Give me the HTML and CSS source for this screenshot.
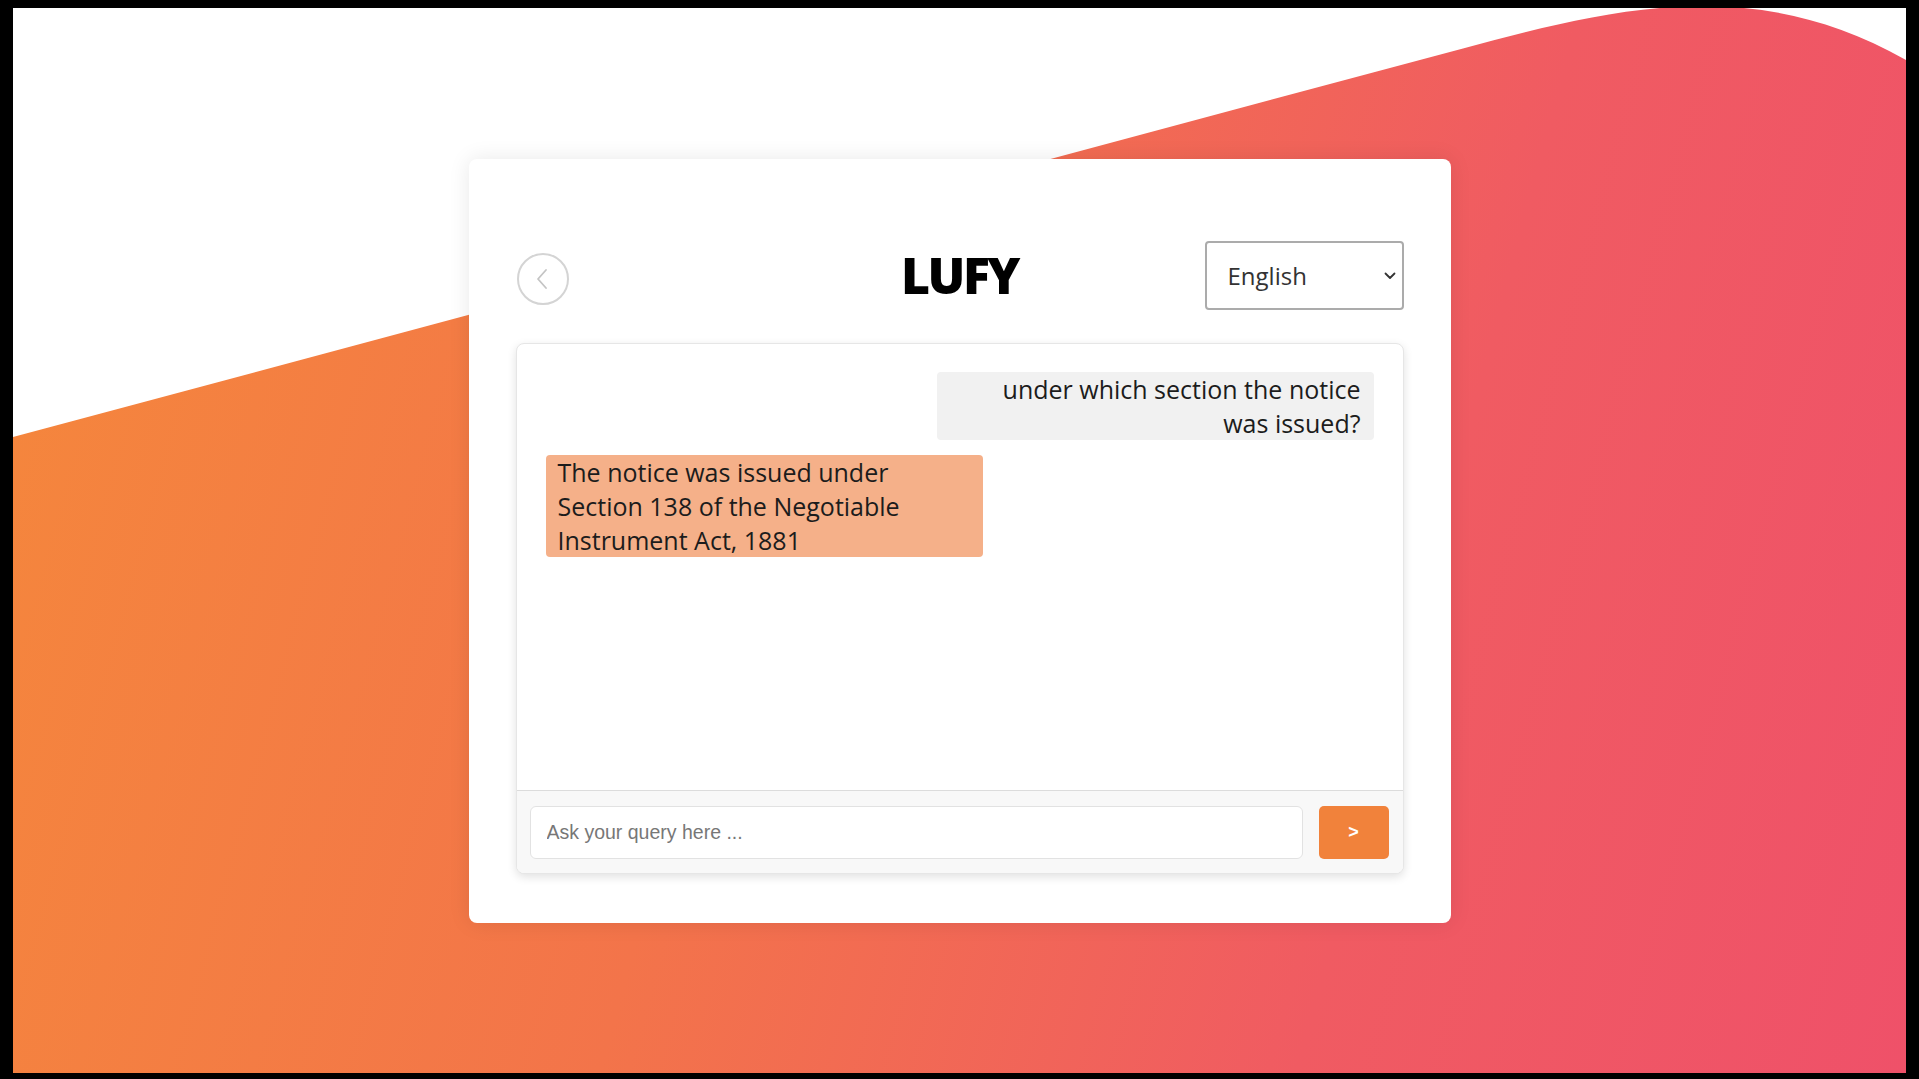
FILE: index.html
```html
<!DOCTYPE html>
<html lang="en">
<head>
<meta charset="utf-8">
<title>LUFY</title>
<link rel="stylesheet" href="styles.css">
</head>
<body>
<div class="screen">
  <svg class="wave" width="1893" height="1065" viewBox="0 0 1893 1065" aria-hidden="true">
    <path d="M0 0 L0 429 L1450 40.4 C1600 0.2 1740 -35 1893 52 L1893 0 Z" fill="#ffffff"/>
  </svg>
  <main class="card">
    <header class="header">
      <button class="back" aria-label="Back">
        <svg width="20" height="24" viewBox="0 0 20 24"><path d="M13 3 L5 12 L13 21" fill="none" stroke="#c4c4c4" stroke-width="1.8" stroke-linecap="round" stroke-linejoin="round"/></svg>
      </button>
      <h1 class="title">LUFY</h1>
      <div class="lang">
        <select class="lang-select">
          <option>English</option>
          <option>Hindi</option>
        </select>
        <svg class="lang-chev" width="12" height="8" viewBox="0 0 12 8"><path d="M1.5 1.5 L6 6 L10.5 1.5" fill="none" stroke="#333" stroke-width="1.8" stroke-linecap="round" stroke-linejoin="round"/></svg>
      </div>
    </header>
    <section class="chat">
      <div class="messages">
        <div class="bubble user">under which section the notice was issued?</div>
        <div class="bubble bot">The notice was issued under Section 138 of the Negotiable Instrument Act, 1881</div>
      </div>
      <form class="composer">
        <input class="query" type="text" placeholder="Ask your query here ...">
        <button class="send" type="button">&gt;</button>
      </form>
    </section>
  </main>
</div>
</body>
</html>
```
FILE: styles.css
```css
html, body {
  margin: 0;
  padding: 0;
}
body {
  background: #000;
  height: 1079px;
  overflow: hidden;
  font-family: "Open Sans", "Noto Sans", sans-serif;
}
.screen {
  position: relative;
  margin: 8px 13px 0 13px;
  height: 1065px;
  background: linear-gradient(105deg, #f5883b 0%, #f3744a 40%, #f05b62 72%, #ef5169 100%);
  display: flex;
  align-items: center;
  justify-content: center;
  overflow: hidden;
}
.wave {
  position: absolute;
  left: 0;
  top: 0;
}
.card {
  position: relative;
  z-index: 1;
  width: 982px;
  height: 764px;
  box-sizing: border-box;
  padding: 47px;
  background: #fff;
  border-radius: 8px;
  box-shadow: 0 0 22px rgba(0, 0, 0, 0.09);
}
.header {
  display: grid;
  grid-template-columns: 1fr auto 1fr;
  align-items: center;
  height: 69px;
  margin-top: 35px;
}
.back {
  justify-self: start;
  width: 52px;
  height: 52px;
  margin: 7px 0 0 1px;
  padding: 0;
  border: 2px solid #d4d4d4;
  border-radius: 50%;
  background: #fff;
  display: flex;
  align-items: center;
  justify-content: center;
}
.title {
  margin: 0;
  font-family: "Open Sans", sans-serif;
  font-weight: 800;
  font-size: 50px;
  line-height: 1;
  letter-spacing: -2.5px;
  color: #000;
}
.lang {
  justify-self: end;
  position: relative;
  width: 199px;
  height: 69px;
}
.lang-select {
  appearance: none;
  -webkit-appearance: none;
  width: 100%;
  height: 100%;
  box-sizing: border-box;
  border: 2px solid #ababab;
  border-radius: 4px;
  background: #fff;
  padding: 0 0 0 21px;
  font-family: "Open Sans", sans-serif;
  font-size: 24px;
  color: #333;
}
.lang-chev {
  position: absolute;
  right: 8px;
  top: 31px;
}
.chat {
  margin-top: 33px;
  height: 531px;
  box-sizing: border-box;
  border: 1px solid #e6e6e6;
  border-radius: 8px;
  box-shadow: 0 3px 10px rgba(0, 0, 0, 0.12);
  display: flex;
  flex-direction: column;
  overflow: hidden;
  background: #fff;
}
.messages {
  flex: 1;
  padding: 28px 29px 0 29px;
  display: flex;
  flex-direction: column;
  gap: 15px;
}
.bubble {
  width: 437px;
  box-sizing: border-box;
  font-size: 25px;
  line-height: 34px;
  color: #1c1c1c;
  border-radius: 4px;
}
.user {
  align-self: flex-end;
  background: #f1f1f1;
  text-align: right;
  padding: 0 13px 0 36px;
}
.bot {
  align-self: flex-start;
  background: #f5b089;
  padding: 0 36px 0 12px;
}
.composer {
  margin: 0;
  border-top: 1px solid #dcdcdc;
  background: #f8f8f8;
  padding: 15px 14px 14px 13px;
  display: flex;
  gap: 16px;
}
.query {
  flex: 1;
  height: 53px;
  box-sizing: border-box;
  border: 1px solid #e2e2e2;
  border-radius: 6px;
  background: #fff;
  padding: 0 16px;
  font-family: "Liberation Sans", Arial, sans-serif;
  font-size: 19.5px;
  color: #333;
}
.query::placeholder {
  color: #777;
}
.send {
  width: 70px;
  height: 53px;
  border: none;
  border-radius: 5px;
  background: #f1823b;
  color: #fff;
  font-family: "Liberation Sans", Arial, sans-serif;
  font-weight: bold;
  font-size: 18px;
  padding: 0;
}
```
